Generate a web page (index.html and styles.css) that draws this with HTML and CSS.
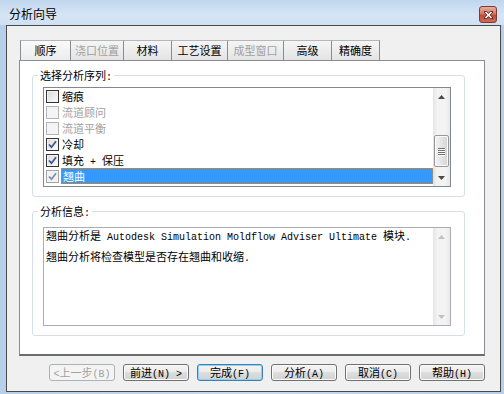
FILE: index.html
```html
<!DOCTYPE html>
<html>
  <head>
    <meta charset="utf-8">
    <title>分析向导</title>
    <link rel="stylesheet" href="styles.css">
  </head>

  <body>
    <div class="window">
      <!-- Title bar -->
      <div class="titlebar">
        <span class="title">分析向导</span>
        <div class="close-button">
          <svg width="9" height="8" viewBox="0 0 9 8">
            <path d="M1.5 1 L7.5 7 M7.5 1 L1.5 7" stroke="#5a2620" stroke-width="3" stroke-linecap="square"/>
            <path d="M1.5 1 L7.5 7 M7.5 1 L1.5 7" stroke="#ffffff" stroke-width="1.6"/>
          </svg>
        </div>
      </div>

      <div class="frame">
        <div class="client">
          <!-- Tabs -->
          <div class="tabs">
            <div class="tab active">顺序</div>
            <div class="tab disabled">浇口位置</div>
            <div class="tab">材料</div>
            <div class="tab wide">工艺设置</div>
            <div class="tab wide disabled">成型窗口</div>
            <div class="tab">高级</div>
            <div class="tab">精确度</div>
          </div>

          <div class="tab-panel">
            <!-- Analysis sequence -->
            <div class="group">
              <div class="group-title">选择分析序列<span class="mono">:</span></div>
              <div class="listbox">
                <ul class="items">
                  <li class="item">
                    <span class="check"></span>
                    <span class="item-label">缩痕</span>
                  </li>
                  <li class="item disabled">
                    <span class="check"></span>
                    <span class="item-label">流道顾问</span>
                  </li>
                  <li class="item disabled">
                    <span class="check"></span>
                    <span class="item-label">流道平衡</span>
                  </li>
                  <li class="item">
                    <span class="check">
                      <svg width="9" height="9" viewBox="0 0 9 9"><path d="M1 4.5 L3.5 7.2 L8 1.3" fill="none" stroke="#3f5590" stroke-width="1.8"/></svg>
                    </span>
                    <span class="item-label">冷却</span>
                  </li>
                  <li class="item">
                    <span class="check">
                      <svg width="9" height="9" viewBox="0 0 9 9"><path d="M1 4.5 L3.5 7.2 L8 1.3" fill="none" stroke="#3f5590" stroke-width="1.8"/></svg>
                    </span>
                    <span class="item-label">填充<span class="mono"> + </span>保压</span>
                  </li>
                  <li class="item selected">
                    <span class="check">
                      <svg width="9" height="9" viewBox="0 0 9 9"><path d="M1 4.5 L3.5 7.2 L8 1.3" fill="none" stroke="#7d8cb5" stroke-width="1.8"/></svg>
                    </span>
                    <span class="item-label">翘曲</span>
                  </li>
                </ul>
                <div class="scrollbar">
                  <div class="scroll-btn">
                    <svg width="7" height="4" viewBox="0 0 7 4"><polygon points="0,4 3.5,0 7,4" fill="#4a4a4a"/></svg>
                  </div>
                  <div class="scroll-track">
                    <div class="thumb">
                      <span class="grip"></span>
                      <span class="grip"></span>
                      <span class="grip"></span>
                      <span class="grip"></span>
                    </div>
                  </div>
                  <div class="scroll-btn">
                    <svg width="7" height="4" viewBox="0 0 7 4"><polygon points="0,0 7,0 3.5,4" fill="#4a4a4a"/></svg>
                  </div>
                </div>
              </div>
            </div>

            <!-- Analysis info -->
            <div class="group">
              <div class="group-title">分析信息<span class="mono">:</span></div>
              <div class="info">
                <div class="info-text">
                  <p class="info-line">翘曲分析是<span class="mono"> Autodesk Simulation Moldflow Adviser Ultimate </span>模块<span class="mono">.</span></p>
                  <p class="info-line">翘曲分析将检查模型是否存在翘曲和收缩<span class="mono">.</span></p>
                </div>
                <div class="scrollbar">
                  <div class="scroll-btn">
                    <svg width="7" height="4" viewBox="0 0 7 4"><polygon points="0,4 3.5,0 7,4" fill="#c2c2c2"/></svg>
                  </div>
                  <div class="scroll-track"></div>
                  <div class="scroll-btn">
                    <svg width="7" height="4" viewBox="0 0 7 4"><polygon points="0,0 7,0 3.5,4" fill="#c2c2c2"/></svg>
                  </div>
                </div>
              </div>
            </div>
          </div>

          <!-- Wizard buttons -->
          <div class="buttons">
            <button class="btn" disabled><span class="mono">&lt;</span>上一步<span class="mono">(B)</span></button>
            <button class="btn">前进<span class="mono">(N) &gt;</span></button>
            <button class="btn default">完成<span class="mono">(F)</span></button>
            <button class="btn">分析<span class="mono">(A)</span></button>
            <button class="btn">取消<span class="mono">(C)</span></button>
            <button class="btn">帮助<span class="mono">(H)</span></button>
          </div>
        </div>
      </div>
    </div>
  </body>
</html>
```

FILE: styles.css
```css
* {
  margin: 0;
  padding: 0;
  box-sizing: border-box;
}

body {
  width: 504px;
  height: 394px;
  overflow: hidden;
  font-family: "Noto Sans CJK SC", sans-serif;
  font-size: 11px;
  color: #000;
}

.window {
  width: 504px;
  height: 394px;
  display: flex;
  flex-direction: column;
  background: linear-gradient(to right, #b7cfe9, #c6daf0 50%, #b7cfe9);
}

/* Title bar */

.titlebar {
  height: 25px;
  display: flex;
  justify-content: space-between;
  align-items: flex-start;
  padding: 0 7px 0 9px;
  background: linear-gradient(#c0d6ee, #d6e5f5 60%, #cfe0f3);
}

.title {
  font-size: 12px;
  line-height: 14px;
  margin-top: 7px;
}

.close-button {
  width: 18px;
  height: 17px;
  margin-top: 6px;
  border: 1px solid #7a3b33;
  border-radius: 3px;
  background: linear-gradient(#e8ab9c, #d47a66 45%, #c04a34 55%, #d06b55);
  display: flex;
  align-items: center;
  justify-content: center;
}

/* Client area */

.frame {
  flex: 1;
  display: flex;
  padding: 0 3px 2px 6px;
}

.client {
  flex: 1;
  display: flex;
  flex-direction: column;
  border: 1px solid #4b4b4b;
  background: #f0f0f0;
  padding: 14px 15px 0 12px;
}

/* Tabs */

.tabs {
  display: flex;
  height: 20px;
  padding-left: 1px;
}

.tab {
  min-width: 48px;
  padding: 0 4px;
  border: 1px solid #898c95;
  border-top-color: #b4b6bb;
  border-left: none;
  border-bottom: none;
  line-height: 19px;
  text-align: center;
  background: linear-gradient(#f5f5f5, #e4e4e4);
}

.tab:first-child {
  border-left: 1px solid #898c95;
}

.tab.wide {
  min-width: 56px;
}

.tab.active {
  min-width: 51px;
  background: linear-gradient(#fafafa, #ececec);
}

.tab.disabled {
  color: #a0a0a0;
}

.tab-panel {
  background: #fff;
  border: 1px solid #898c95;
  border-bottom: 2px solid #6c6c6c;
  padding: 0 19px 18px 12px;
}

/* Group boxes */

.group {
  margin-top: 14px;
  border: 1px solid #d5dfe5;
  border-radius: 3px;
  padding: 0 13px 9px 10px;
}

.group-title {
  width: fit-content;
  height: 12px;
  margin: -7px 0 0 -5px;
  padding: 0 2px;
  background: #fff;
  line-height: 12px;
}

/* Sequence list */

.listbox {
  margin-top: 6px;
  height: 100px;
  display: flex;
  border: 1px solid #828790;
  background: #fff;
}

.items {
  flex: 1;
  list-style: none;
}

.item {
  display: flex;
  align-items: center;
  height: 16px;
}

.check {
  width: 13px;
  height: 13px;
  margin-left: 2px;
  border: 1px solid #333;
  background: linear-gradient(135deg, #d8d8d8, #fdfdfd);
  box-shadow: inset 0 0 0 1px #f4f4f4;
  display: flex;
  align-items: center;
  justify-content: center;
}

.item-label {
  flex: 1;
  height: 16px;
  line-height: 16px;
  margin-left: 2px;
  padding-left: 1px;
}

.item.disabled .check {
  border-color: #b4b4b4;
  background: #f4f4f4;
  box-shadow: none;
}

.item.disabled .item-label {
  color: #a0a0a0;
}

.item.selected .check {
  border-color: #a4a4a4;
  background: #f2f2f2;
}

.item.selected .item-label {
  background: #3399ff;
  color: #fff;
  border: 1px dotted #c98a46;
  line-height: 14px;
}

/* Scrollbars */

.scrollbar {
  width: 17px;
  display: flex;
  flex-direction: column;
  background: linear-gradient(to right, #e4e4e4, #f3f3f3 25%, #f3f3f3 75%, #e8e8e8);
}

.scroll-btn {
  height: 17px;
  display: flex;
  align-items: center;
  justify-content: center;
}

.scroll-track {
  flex: 1;
  padding: 30px 1px 0;
}

.thumb {
  height: 32px;
  border: 1px solid #979797;
  border-radius: 2px;
  background: linear-gradient(to right, #f4f4f4, #e4e4e4 50%, #d4d4d4);
  box-shadow: inset 0 0 0 1px #fafafa;
  display: flex;
  flex-direction: column;
  align-items: center;
  justify-content: center;
  gap: 1px;
}

.grip {
  width: 7px;
  height: 1px;
  background: #6e6e6e;
  box-shadow: 0 1px 0 #ffffff;
}

/* Info box */

.info {
  margin-top: 10px;
  height: 99px;
  display: flex;
  border: 1px solid #abadb3;
  background: #fff;
}

.info-text {
  flex: 1;
  padding: 0 2px;
}

.info-line {
  height: 14px;
  line-height: 14px;
  white-space: nowrap;
}

.info-line + .info-line {
  margin-top: 7px;
}

.mono {
  font-family: "Liberation Mono", monospace;
  font-size: 10px;
}

/* Wizard buttons */

.buttons {
  display: flex;
  justify-content: flex-end;
  gap: 8px;
  margin-top: 8px;
}

.btn {
  width: 66px;
  height: 17px;
  font-family: "Noto Sans CJK SC", sans-serif;
  font-size: 11px;
  line-height: 15px;
  color: #000;
  white-space: nowrap;
  border: 1px solid #707070;
  border-radius: 3px;
  background: linear-gradient(#f3f3f3, #ececec 50%, #dedede 50%, #d2d2d2);
  box-shadow: inset 0 0 0 1px #fbfbfb;
}

.btn.default {
  border-color: #3c7fb1;
  box-shadow: inset 0 0 0 1px #8fd0f4;
}

.btn:disabled {
  color: #a0a0a0;
  border-color: #adb2b5;
  background: #f4f4f4;
  box-shadow: none;
}
```
